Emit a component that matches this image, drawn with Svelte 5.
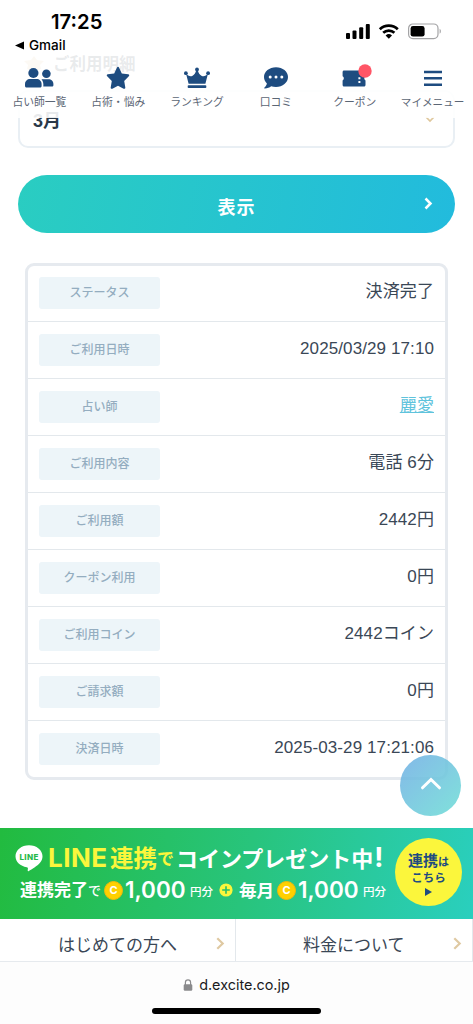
<script lang="ts">
  interface Row {
    label: string
    value: string
    link?: boolean
  }

  const nav = [
    { id: "people", label: "占い師一覧" },
    { id: "star", label: "占術・悩み" },
    { id: "crown", label: "ランキング" },
    { id: "comment", label: "口コミ" },
    { id: "coupon", label: "クーポン" },
    { id: "menu", label: "マイメニュー" },
  ]

  const rows: Row[] = [
    { label: "ステータス", value: "決済完了" },
    { label: "ご利用日時", value: "2025/03/29 17:10" },
    { label: "占い師", value: "麗愛", link: true },
    { label: "ご利用内容", value: "電話 6分" },
    { label: "ご利用額", value: "2442円" },
    { label: "クーポン利用", value: "0円" },
    { label: "ご利用コイン", value: "2442コイン" },
    { label: "ご請求額", value: "0円" },
    { label: "決済日時", value: "2025-03-29 17:21:06" },
  ]
</script>

<div class="screen">
  <main>
    <h1 class="page-title">
      <svg width="22" height="16" viewBox="0 0 22 16">
        <path d="M11 0l3 4 7 1-4 4 1 4-7 3-7-3 1-4-4-4 7-1z" fill="#e3c99a" />
      </svg>
      ご利用明細
    </h1>

    <div class="select">
      <span>3月</span>
      <svg class="select-arrow" width="10" height="7" viewBox="0 0 10 7">
        <path d="M1 1l4 4 4-4" fill="none" stroke="#dfc79c" stroke-width="1.7" />
      </svg>
    </div>

    <button type="button" class="submit">
      <span>表示</span>
      <svg width="9" height="13" viewBox="0 0 9 13">
        <path d="M1.5 1.5l5 5-5 5" fill="none" stroke="#fff" stroke-width="2.5" />
      </svg>
    </button>

    <dl class="detail">
      {#each rows as row (row.label)}
        <div class="detail-row">
          <dt>{row.label}</dt>
          <dd>
            {#if row.link}<a href="#top">{row.value}</a>{:else}{row.value}{/if}
          </dd>
        </div>
      {/each}
    </dl>
  </main>

  <section class="banner">
    <div class="banner-copy">
      <div class="banner-head">
        <svg class="line-logo" width="28" height="27" viewBox="0 0 28 27">
          <path
            d="M14 .3C6.500 .3.500 5.200.500 11.300c0 5.500 4.800 10 11.300 10.900.9.200 1.200.5 1.100 1.300l-.2 1.800c-.1.900.4 1.100 1.100.7 3-1.600 8.500-5 11.200-8.200 1.700-1.900 2.500-4 2.500-6.500C27.500 5.200 21.500.3 14 .3z"
            fill="#fff"
          />
          <text x="13.900" y="14.600" text-anchor="middle" textLength="19">LINE</text>
        </svg>
        <span class="head-line">LINE</span><span class="head-link">連携</span><span class="head-de">で</span>
        <span class="head-gift">コインプレゼント中</span><span class="head-bang">!</span>
      </div>
      <div class="banner-sub">
        <span class="sub-when">連携完了</span><span class="sub-de">で</span>
        <i class="coin">C</i><b class="amount">1,000</b><small>円分</small>
        <svg class="plus" width="14" height="14" viewBox="0 0 14 14">
          <circle cx="7" cy="7" r="6.600" fill="#fbf63c" />
          <path d="M7 3.200v7.600M3.200 7h7.600" stroke="#27bd68" stroke-width="1.600" />
        </svg>
        <span class="sub-month">毎月</span>
        <i class="coin">C</i><b class="amount">1,000</b><small>円分</small>
      </div>
    </div>
    <div class="banner-cta">
      <span class="cta-top">連携<em>は</em></span>
      <span class="cta-mid">こちら</span>
      <svg width="7" height="8" viewBox="0 0 7 8"><path d="M0 0l7 4-7 4z" fill="#1e4c80" /></svg>
    </div>
  </section>

  <nav class="links">
    <a class="first" href="#top">
      <span>はじめての方へ</span>
      <svg width="9" height="13" viewBox="0 0 9 13">
        <path d="M1.300 1.200l5.400 5.300-5.400 5.300" fill="none" stroke="#dfc9a2" stroke-width="2.200" />
      </svg>
    </a>
    <a class="second" href="#top">
      <span>料金について</span>
      <svg width="9" height="13" viewBox="0 0 9 13">
        <path d="M1.300 1.200l5.400 5.300-5.400 5.300" fill="none" stroke="#dfc9a2" stroke-width="2.200" />
      </svg>
    </a>
  </nav>

  <footer class="browser-bar">
    <div class="address">
      <svg width="10" height="12" viewBox="0 0 10 12">
        <path d="M2.400 6V3.500a2.600 2.600 0 015.200 0V6" fill="none" stroke="#8a8a8c" stroke-width="1.200" />
        <rect x=".7" y="5.200" width="8.600" height="6.600" rx="1.300" fill="#8a8a8c" />
      </svg>
      <span>d.excite.co.jp</span>
    </div>
    <div class="home-indicator"></div>
  </footer>

  <header class="top">
    <div class="status">
      <div class="clock">
        <time>17:25</time>
        <div class="back">
          <svg width="9" height="9" viewBox="0 0 9 9"><path d="M0 4.500L9 .500v8z" /></svg>
          <span>Gmail</span>
        </div>
      </div>
      <svg class="indicators" width="96" height="18" viewBox="0 0 96 18">
        <rect x="0" y="10" width="4" height="6" rx="1" />
        <rect x="6.500" y="7.500" width="4" height="8.500" rx="1" />
        <rect x="13.200" y="4.300" width="4" height="11.700" rx="1" />
        <rect x="19.800" y="1" width="4" height="15" rx="1" />
        <g fill="none" stroke="#000" stroke-width="2.700">
          <path d="M33.800 6.200a13 13 0 0118 0" />
          <path d="M37.200 9.800a8.200 8.200 0 0111.200 0" />
        </g>
        <path d="M39.600 12.400a4.700 4.700 0 016.400 0l-3.200 3.400z" />
        <rect x="62.600" y="1" width="29.400" height="14.600" rx="4.300" fill="none" stroke="#a4a4a6" stroke-width="1.200" />
        <rect x="64.600" y="3" width="14" height="10.600" rx="2.400" />
        <path d="M93.600 5.800c1.700.7 1.700 4.300 0 5z" fill="#a4a4a6" />
      </svg>
    </div>

    <nav class="tabs">
      {#each nav as item (item.id)}
        <a class="tab" href="#top">
          <span class="tab-icon">
            {#if item.id === "people"}
              <svg width="30" height="24" viewBox="0 0 30 24">
                <circle cx="9.400" cy="7" r="5.100" />
                <circle cx="22.400" cy="7.700" r="4.300" />
                <path d="M1 20v-1.800C1 15 3.200 13 6.200 13h6.200c3 0 5.200 2 5.200 5.200V20c0 .9-.6 1.500-1.500 1.500H2.500C1.600 21.500 1 20.900 1 20z" />
                <path d="M17.500 13.200h7c2.800 0 4.900 2 4.900 4.700v1.300c0 .8-.6 1.300-1.300 1.300h-8.800c.4-2.800-.2-5.600-1.800-7.300z" />
              </svg>
            {:else if item.id === "star"}
              <svg width="24" height="24" viewBox="0 0 24 24">
                <path
                  d="M11 1.400c.4-.9 1.600-.9 2 0l2.800 6 6.400.9c1 .1 1.400 1.300.6 2L18.200 15l1.100 6.500c.2 1-.8 1.700-1.700 1.200L12 19.700l-5.600 3c-.9.500-1.900-.2-1.700-1.200L5.800 15l-4.600-4.700c-.8-.7-.4-1.900.6-2l6.400-.9z"
                />
              </svg>
            {:else if item.id === "crown"}
              <svg width="28" height="24" viewBox="0 0 28 24">
                <circle cx="14" cy="3.500" r="1.900" />
                <circle cx="2.900" cy="7.200" r="1.900" />
                <circle cx="25.100" cy="7.200" r="1.900" />
                <path d="M3 7.500c1.800 2.300 4.100 3.200 6.200 2.400C11.200 9 12.700 7 13.300 4h1.400c.6 3 2.100 5 4.100 5.900 2.100.8 4.400-.1 6.200-2.400l-2.600 10.300H5.600z" />
                <rect x="4.700" y="19.200" width="18.600" height="2.900" rx=".8" />
              </svg>
            {:else if item.id === "comment"}
              <svg width="26" height="24" viewBox="0 0 26 24">
                <path d="M13 1.200C6.300 1.200 1 5.500 1 11c0 2.500 1.100 4.800 2.900 6.500-.4 1.700-1.300 3-2.400 4-.5.500-.3 1 .4 1 2.500-.1 4.600-1 6.200-2.300 1.500.5 3.200.8 4.900.8 6.700 0 12-4.500 12-10S19.700 1.200 13 1.200z" />
                <g fill="#fff">
                  <circle cx="7.200" cy="11.100" r="1.500" />
                  <circle cx="13" cy="11.100" r="1.500" />
                  <circle cx="18.800" cy="11.100" r="1.500" />
                </g>
              </svg>
            {:else if item.id === "coupon"}
              <svg class="coupon" width="34" height="24" viewBox="0 0 34 24">
                <path d="M6.100 4.400H26c.9 0 1.500.6 1.500 1.500v4.300a2.400 2.400 0 000 4.200v4.500c0 .9-.6 1.500-1.500 1.500H6.100c-.9 0-1.500-.6-1.500-1.500v-4.500a2.400 2.400 0 000-4.200V5.900c0-.9.600-1.500 1.500-1.500z" />
                <path d="M21.400 11.200v2M21.400 15v2" stroke="#fff" stroke-width="2" />
                <circle cx="27" cy="5" r="6.700" fill="#ff5566" />
              </svg>
            {:else}
              <svg width="20" height="24" viewBox="0 0 20 24">
                <path d="M1 6h18M1 12.300h18M1 18.700h18" stroke="#1e4c80" stroke-width="2.600" />
              </svg>
            {/if}
          </span>
          <span class="tab-label">{item.label}</span>
        </a>
      {/each}
    </nav>
  </header>

  <button type="button" class="to-top" aria-label="ページの先頭へ">
    <svg width="22" height="14" viewBox="0 0 22 14">
      <path d="M2.500 10.800l8.500-8.300 8.500 8.300" fill="none" stroke="#fff" stroke-width="3" stroke-linecap="round" />
    </svg>
  </button>
</div>

<style>
  :global(body) {
    margin: 0;
    background: #fff;
  }

  .screen {
    position: relative;
    display: flex;
    flex-direction: column;
    width: 473px;
    height: 1024px;
    overflow: hidden;
    background: #fff;
    color: #3a4756;
    font-family: "Liberation Sans", "Noto Sans CJK JP", sans-serif;
  }

  a {
    color: inherit;
    text-decoration: none;
  }

  button {
    border: 0;
    padding: 0;
    font: inherit;
  }

  svg {
    display: block;
    flex-shrink: 0;
  }

  main {
    display: flex;
    flex-direction: column;
    box-sizing: border-box;
    height: 828px;
    padding: 51px 18px 0;
  }

  /* sticky header */

  .top {
    position: absolute;
    inset: 0 0 auto;
    height: 118px;
    background: rgba(255, 255, 255, 0.89);
  }

  .status {
    display: flex;
    justify-content: space-between;
    height: 66px;
    color: #000;
    font-family: Inter, sans-serif;
  }

  .clock {
    padding: 10px 0 0 15px;
  }

  time {
    display: block;
    margin-left: 36px;
    font-size: 20.300px;
    font-weight: 600;
    line-height: 24px;
  }

  .back {
    display: flex;
    align-items: center;
    gap: 5px;
    margin-top: 2px;
    font-size: 13.500px;
    font-weight: 500;
    line-height: 18px;
  }

  .indicators {
    margin: 23px 31px 0 0;
  }

  .tabs {
    display: grid;
    grid-template-columns: repeat(6, 1fr);
  }

  .tab {
    display: flex;
    flex-direction: column;
    align-items: center;
    color: #5b6675;
  }

  .tab:last-child {
    padding-right: 2px;
  }

  .tab-icon {
    fill: #1e4c80;
  }

  .coupon {
    overflow: visible;
  }

  .tab-label {
    margin-top: 4px;
    font-size: 10.800px;
    line-height: 16px;
    white-space: nowrap;
  }

  .tab:last-child .tab-label {
    font-size: 10.600px;
  }

  /* page content */

  .page-title {
    display: flex;
    align-items: center;
    gap: 8px;
    margin: 0 0 13px 5px;
    font-size: 16.500px;
    line-height: 26px;
  }

  .select {
    display: flex;
    justify-content: space-between;
    align-items: center;
    box-sizing: border-box;
    height: 58px;
    padding: 0 18px 0 13px;
    border: 2px solid #e9eff4;
    border-radius: 10px;
    color: #2a3848;
    font-size: 18px;
    font-weight: 700;
  }

  .submit {
    display: grid;
    grid-template-columns: 1fr auto 1fr;
    align-items: center;
    height: 58px;
    margin-top: 26.500px;
    border-radius: 29px;
    background: linear-gradient(100deg, #2acdc1, #22bbdd);
    color: #fff;
    font-size: 18px;
    font-weight: 700;
    letter-spacing: 1px;
  }

  .submit span {
    grid-column: 2;
    padding-top: 4px;
  }

  .submit svg {
    justify-self: end;
    margin-right: 22px;
  }

  .detail {
    margin: 30.500px 7px 0;
    border: 3px solid #e6eaef;
    border-radius: 9px;
  }

  .detail-row {
    display: flex;
    justify-content: space-between;
    box-sizing: border-box;
    height: 57px;
    padding: 12px 11px 0;
    border-bottom: 1px solid #e3e8ec;
  }

  .detail-row:first-child {
    height: 56px;
    padding-top: 11px;
  }

  .detail-row:last-child {
    height: 56px;
    border-bottom: 0;
  }

  dt {
    width: 121px;
    height: 32px;
    border-radius: 3px;
    background: #edf5f9;
    color: #94adc0;
    font-size: 12px;
    font-weight: 500;
    line-height: 33px;
    text-align: center;
  }

  dd {
    margin: 0;
    font-size: 17px;
    letter-spacing: 0.100px;
    line-height: 30px;
  }

  dd a {
    color: #5fc3dc;
    text-decoration: underline;
  }

  .to-top {
    position: absolute;
    left: 400px;
    top: 754.500px;
    display: grid;
    place-items: center;
    width: 61px;
    height: 61px;
    padding-bottom: 2px;
    border-radius: 50%;
    background: linear-gradient(135deg, rgba(110, 172, 228, 0.85), rgba(110, 222, 214, 0.88));
  }

  /* LINE campaign banner */

  .banner {
    display: flex;
    box-sizing: border-box;
    height: 91px;
    background: linear-gradient(100deg, #22bb3f, #28c47c 52%, #2acfbe);
    color: #fff;
    font-weight: 700;
    white-space: nowrap;
  }

  .banner-copy {
    width: 395px;
    padding-top: 14px;
  }

  .banner-head,
  .banner-sub {
    display: flex;
    align-items: center;
    height: 32px;
    line-height: 32px;
  }

  .banner-head {
    padding-left: 15px;
  }

  .banner-sub {
    padding-left: 20px;
  }

  .line-logo text {
    fill: #27b94a;
    font: 800 8px Inter, sans-serif;
  }

  .head-line {
    width: 62px;
    margin-left: 5px;
    color: #fbf63c;
    font-family: Inter, sans-serif;
    font-size: 26px;
    letter-spacing: 0.500px;
  }

  .head-link {
    padding-top: 1px;
    color: #fbf63c;
    font-size: 23.500px;
  }

  .head-de {
    margin-right: 2px;
    padding-top: 3px;
    color: #fbf63c;
    font-size: 17px;
  }

  .head-gift {
    padding-top: 3px;
    font-size: 22px;
  }

  .head-bang {
    margin-left: 1px;
    font-family: Inter, sans-serif;
    font-size: 27px;
  }

  .sub-when {
    padding-top: 1px;
    font-size: 17px;
  }

  .sub-de {
    padding-top: 2px;
    font-size: 13px;
    font-weight: 500;
  }

  .coin {
    box-sizing: border-box;
    width: 19px;
    height: 19px;
    margin: 0 2px 0 3px;
    border: 1px solid #f0b90b;
    border-radius: 50%;
    background: #ffd000;
    font: 700 11px/17px Inter, sans-serif;
    text-align: center;
  }

  .amount {
    width: 61.500px;
    font-family: Inter, sans-serif;
    font-size: 22.500px;
    font-weight: 600;
  }

  small {
    padding: 3px 0 0 3.500px;
    font-size: 11.500px;
    font-weight: 500;
  }

  .plus {
    margin: 0 6px;
  }

  .sub-month {
    padding-top: 1px;
    font-size: 17.500px;
  }

  .banner-cta {
    display: flex;
    flex-direction: column;
    align-items: center;
    box-sizing: border-box;
    width: 67px;
    height: 68px;
    margin-top: 10px;
    padding-top: 15px;
    border-radius: 50%;
    background: #fbf63c;
    color: #1e4c80;
  }

  .cta-top {
    font-size: 15px;
    line-height: 16px;
  }

  .cta-top em {
    font-size: 11px;
    font-style: normal;
  }

  .cta-mid {
    margin-bottom: 2px;
    font-size: 11.500px;
    line-height: 16px;
  }

  /* guide links */

  .links {
    display: grid;
    grid-template-columns: 236px 1fr;
    box-sizing: border-box;
    height: 43px;
    border-bottom: 1px solid #e6eaee;
    font-size: 17px;
  }

  .links a {
    display: flex;
    align-items: center;
    justify-content: space-between;
    border-right: 1px solid #e3e8ec;
    padding: 7px 10px 0 58px;
  }

  .links .second {
    padding-left: 67px;
  }

  /* browser chrome */

  .browser-bar {
    display: flex;
    flex-direction: column;
    align-items: center;
    height: 62px;
    background: #fdfdfd;
    color: #1b1b1d;
    font: 14.400px/20px Inter, sans-serif;
  }

  .address {
    display: flex;
    align-items: center;
    gap: 6px;
    margin-top: 13px;
  }

  .home-indicator {
    width: 169px;
    height: 6px;
    margin-top: 13px;
    border-radius: 3px;
    background: #000;
  }
</style>
